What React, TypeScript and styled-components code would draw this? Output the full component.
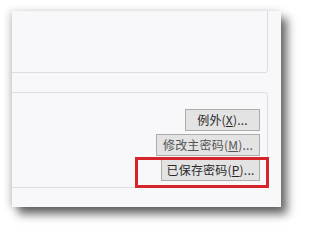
import React from "react"
import styled, { createGlobalStyle } from "styled-components"

const GlobalStyle = createGlobalStyle`
  html, body {
    margin: 0;
    padding: 0;
    background: #ffffff;
  }
  body {
    font-family: "Noto Sans CJK SC", "Liberation Sans", sans-serif;
    font-size: 12px;
  }
`

const Page = styled.div`
  width: 301px;
  height: 228px;
  box-sizing: border-box;
  padding: 11px 20px 0 12px;
`

const Window = styled.div`
  position: relative;
  width: 269px;
  height: 196px;
  background: #f8f8fa;
  overflow: hidden;
  box-shadow: 6px 7px 9px rgba(0, 0, 0, 0.6), -3px 0 7px rgba(0, 0, 0, 0.16);
`

const Body = styled.div`
  display: flex;
  flex-direction: column;
  padding-right: 13px;
`

const GroupBox = styled.div<{ $gap?: number; $height: number }>`
  box-sizing: border-box;
  margin: ${p => p.$gap ?? -10}px 0 0 -10px;
  height: ${p => p.$height}px;
  border: 1px solid #dcdde2;
  border-radius: 3px;
`

const ButtonStack = styled(GroupBox)`
  display: flex;
  flex-direction: column;
  align-items: flex-end;
  gap: 3px;
  padding: 16px 7px 0 0;
`

const Button = styled.button<{ $width: number; $dim?: boolean }>`
  box-sizing: border-box;
  width: ${p => p.$width}px;
  height: 22px;
  margin: 0;
  padding: 0;
  border: 1px solid #adadad;
  background: #e3e3e3;
  color: ${p => (p.$dim ? "#555" : "#2a2a2a")};
  font-family: "Noto Sans CJK SC", "Liberation Sans", sans-serif;
  font-size: 12px;
  line-height: 20px;
  letter-spacing: 0.2px;
  text-align: center;
  white-space: nowrap;

  u {
    text-underline-offset: 1px;
  }
`

const Highlight = styled.div`
  position: absolute;
  left: 123px;
  top: 146px;
  width: 134px;
  height: 31px;
  box-sizing: border-box;
  border: 3px solid #d5252b;
`

const buttons = [
  { label: "例外", key: "X", width: 75 },
  { label: "修改主密码", key: "M", width: 104, dim: true },
  { label: "已保存密码", key: "P", width: 99 },
]

export default function App() {
  return (
    <>
      <GlobalStyle />
      <Page>
        <Window>
          <Body>
            <GroupBox $height={72} />
            <ButtonStack $gap={19} $height={96}>
              {buttons.map(b => (
                <Button key={b.key} $width={b.width} $dim={b.dim}>
                  {b.label}(<u>{b.key}</u>)...
                </Button>
              ))}
            </ButtonStack>
          </Body>
          <Highlight />
        </Window>
      </Page>
    </>
  )
}
